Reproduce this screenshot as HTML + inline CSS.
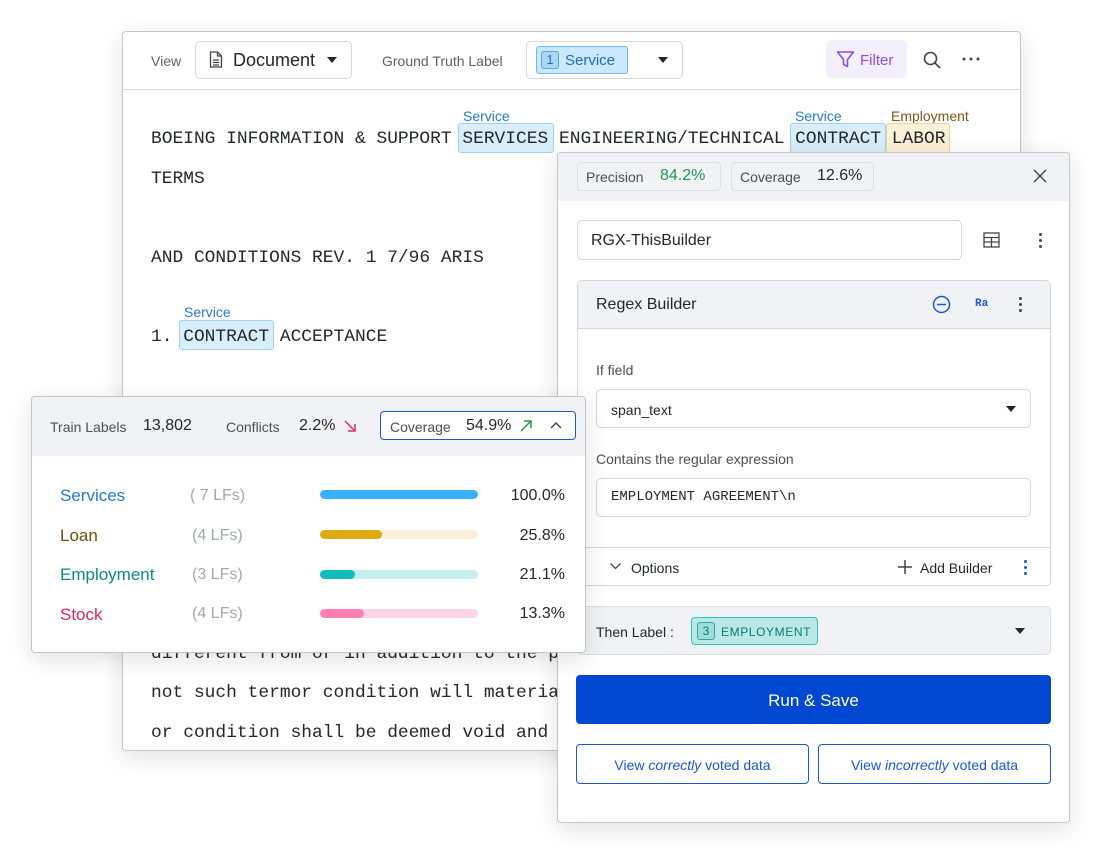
<!DOCTYPE html>
<html><head><meta charset="utf-8"><style>
*{box-sizing:border-box;margin:0;padding:0}
body{width:1100px;height:853px;background:#fff;position:relative;overflow:hidden;font-family:"Liberation Sans",sans-serif;color:#25272b}
.a{position:absolute}
.panel{position:absolute;background:#fff;border:1px solid #c3c6cc;border-radius:4px;box-shadow:0 6px 24px rgba(0,0,0,.12)}
.mono{font-family:"Liberation Mono",monospace;font-size:17.9px;color:#25272b;white-space:pre;line-height:20px}
.lbl{font-size:14px;color:#1f7ad6;white-space:nowrap;line-height:16px}
.chip{position:absolute;border:1px solid #9fd2f3;background:#d9eefb;border-radius:3px}
.t{position:absolute;white-space:nowrap;line-height:1}
.box{position:absolute;border:1px solid #d3d6dc;border-radius:5px;background:#fff}
.tri{width:0;height:0;border-left:5px solid transparent;border-right:5px solid transparent;border-top:6px solid #25272b;position:absolute}
.dots{position:absolute;width:3px}
.dots i{display:block;width:3px;height:3px;border-radius:50%;background:#444;margin-bottom:3px}
#pop{position:absolute;left:0;top:0;width:1100px;height:853px;z-index:10;pointer-events:none}
</style></head><body>

<div class="panel" style="left:122px;top:31px;width:899px;height:720px;">
  <div class="a" style="left:0;top:57px;width:897px;height:1px;background:#d5d8dd"></div>
</div>
<div class="t" style="left:151px;top:54px;font-size:14px;color:#5c6068">View</div>
<div class="box" style="left:195px;top:41px;width:157px;height:38px;"></div>
<svg class="a" style="left:209px;top:51px" width="14" height="17" viewBox="0 0 14 17" fill="none" stroke="#444" stroke-width="1.3"><path d="M1.5 1h7l4 4v11h-11z"/><path d="M8.5 1v4h4"/><path d="M4 9h6M4 11.5h6M4 14h6"/></svg>
<div class="t" style="left:233px;top:51px;font-size:18px;color:#25272b">Document</div>
<div class="tri" style="left:327px;top:57px"></div>
<div class="t" style="left:382px;top:54px;font-size:14px;color:#5c6068">Ground Truth Label</div>
<div class="box" style="left:526px;top:41px;width:157px;height:38px;"></div>
<div class="chip" style="left:536px;top:46px;width:92px;height:28px;border-color:#6bbaf0;background:#cbe8fc"></div>
<div class="a" style="left:541px;top:51px;width:18px;height:18px;border:1px solid #5aa8e0;border-radius:3px;background:#aad7f6;font-size:13px;color:#1f6bbd;text-align:center;line-height:16px">1</div>
<div class="t" style="left:565px;top:53px;font-size:15px;color:#1f6bbd">Service</div>
<div class="tri" style="left:658px;top:57px"></div>
<div class="a" style="left:826px;top:40px;width:81px;height:38px;background:#f3effd;border-radius:5px"></div>
<svg class="a" style="left:836px;top:50px" width="19" height="19" viewBox="0 0 19 19" fill="none" stroke="#8a4ee6" stroke-width="1.6" stroke-linejoin="round"><path d="M1.5 2h16l-6 7.5v7l-4-2v-5z"/></svg>
<div class="t" style="left:860px;top:53px;font-size:15px;color:#8a4ee6">Filter</div>
<svg class="a" style="left:922px;top:50px" width="20" height="20" viewBox="0 0 20 20" fill="none" stroke="#444" stroke-width="1.6"><circle cx="8.5" cy="8.5" r="6"/><path d="M13 13l5 5"/></svg>
<svg class="a" style="left:962px;top:57px" width="18" height="4" viewBox="0 0 18 4" fill="#444"><circle cx="2" cy="2" r="1.5"/><circle cx="9" cy="2" r="1.5"/><circle cx="16" cy="2" r="1.5"/></svg>

<div class="a lbl" style="left:463px;top:108px">Service</div>
<div class="a lbl" style="left:795px;top:108px">Service</div>
<div class="a lbl" style="left:891px;top:108px;color:#7a5a14">Employment</div>
<div class="chip" style="left:458px;top:123px;width:96px;height:30px"></div>
<div class="chip" style="left:790px;top:123px;width:96px;height:30px"></div>
<div class="chip" style="left:886px;top:123px;width:64px;height:30px;background:#fbf1d9;border-color:#ecd49a"></div>
<div class="a mono" style="left:151px;top:129px">BOEING INFORMATION &amp; SUPPORT SERVICES ENGINEERING/TECHNICAL CONTRACT LABOR</div>
<div class="a mono" style="left:151px;top:169px">TERMS</div>
<div class="a mono" style="left:151px;top:248px">AND CONDITIONS REV. 1 7/96 ARIS</div>
<div class="a lbl" style="left:184px;top:304px">Service</div>
<div class="chip" style="left:179px;top:320px;width:95px;height:30px"></div>
<div class="a mono" style="left:151px;top:327px">1. CONTRACT ACCEPTANCE</div>
<div class="a mono" style="left:151px;top:644px">different from or in addition to the p</div>
<div class="a mono" style="left:151px;top:683px">not such termor condition will materia</div>
<div class="a mono" style="left:151px;top:723px">or condition shall be deemed void and</div>

<div class="panel" style="left:557px;top:152px;width:513px;height:671px;overflow:hidden">
  <div class="a" style="left:0;top:0;width:513px;height:48px;background:#f1f2f6"></div>
</div>
<div class="a" style="left:577px;top:162px;width:144px;height:29px;border:1px solid #dcdfe4;border-radius:4px;background:#f1f2f6"></div>
<div class="t" style="left:586px;top:170px;font-size:14px;color:#4b4f57">Precision</div>
<div class="t" style="left:660px;top:168px;font-size:16px;color:#1e9a4a">84.2%</div>
<div class="a" style="left:731px;top:162px;width:143px;height:29px;border:1px solid #dcdfe4;border-radius:4px;background:#f1f2f6"></div>
<div class="t" style="left:740px;top:170px;font-size:14px;color:#4b4f57">Coverage</div>
<div class="t" style="left:817px;top:168px;font-size:16px;color:#25272b">12.6%</div>
<svg class="a" style="left:1033px;top:169px" width="14" height="14" viewBox="0 0 14 14" stroke="#444" stroke-width="1.5"><path d="M1 1l12 12M13 1L1 13"/></svg>

<div class="box" style="left:577px;top:220px;width:385px;height:40px;"></div>
<div class="t" style="left:591px;top:233px;font-size:16px;color:#25272b">RGX-ThisBuilder</div>
<svg class="a" style="left:983px;top:232px" width="17" height="16" viewBox="0 0 17 16" fill="none" stroke="#444" stroke-width="1.3"><rect x="1" y="1" width="15" height="14"/><path d="M1 5.5h15M1 10h15M8.5 5.5V15"/></svg>
<div class="dots" style="left:1039px;top:233px"><i></i><i></i><i></i></div>

<div class="a" style="left:577px;top:280px;width:474px;height:306px;border:1px solid #d3d6dc;border-radius:5px;background:#fff;overflow:hidden">
  <div class="a" style="left:0;top:0;width:474px;height:48px;background:#f1f2f6;border-bottom:1px solid #d3d6dc"></div>
  <div class="a" style="left:0;top:266px;width:474px;height:1px;background:#d3d6dc"></div>
</div>
<div class="t" style="left:596px;top:297px;font-size:16px;color:#25272b">Regex Builder</div>
<svg class="a" style="left:932px;top:295px" width="19" height="19" viewBox="0 0 19 19" fill="none" stroke="#1a56db" stroke-width="1.5"><circle cx="9.5" cy="9.5" r="8"/><path d="M5 9.5h9"/></svg>
<div class="t" style="left:975px;top:299px;font-size:11px;font-weight:bold;color:#1a56db;font-family:'Liberation Mono',monospace">Ra</div>
<div class="dots" style="left:1019px;top:297px"><i></i><i></i><i></i></div>

<div class="t" style="left:596px;top:363px;font-size:14px;color:#4b4f57">If field</div>
<div class="box" style="left:596px;top:389px;width:435px;height:39px;"></div>
<div class="t" style="left:611px;top:403px;font-size:14px;color:#25272b">span_text</div>
<div class="tri" style="left:1006px;top:406px"></div>
<div class="t" style="left:596px;top:452px;font-size:14px;color:#4b4f57">Contains the regular expression</div>
<div class="box" style="left:596px;top:478px;width:435px;height:39px;"></div>
<div class="t" style="left:611px;top:490px;font-size:14px;color:#25272b;font-family:'Liberation Mono',monospace">EMPLOYMENT AGREEMENT\n</div>

<svg class="a" style="left:609px;top:562px" width="13" height="9" viewBox="0 0 13 9" fill="none" stroke="#444" stroke-width="1.3"><path d="M1.5 1.5l5 5 5-5"/></svg>
<div class="t" style="left:631px;top:561px;font-size:14px;color:#25272b">Options</div>
<svg class="a" style="left:898px;top:560px" width="14" height="14" viewBox="0 0 14 14" stroke="#444" stroke-width="1.5"><path d="M7 0v14M0 7h14"/></svg>
<div class="t" style="left:920px;top:561px;font-size:14px;color:#25272b">Add Builder</div>
<div class="dots" style="left:1024px;top:560px"><i style="background:#1a56db"></i><i style="background:#1a56db"></i><i style="background:#1a56db"></i></div>

<div class="a" style="left:577px;top:606px;width:474px;height:49px;border:1px solid #dcdfe4;border-radius:5px;background:#f1f2f6"></div>
<div class="t" style="left:596px;top:625px;font-size:14px;color:#25272b">Then Label :</div>
<div class="a" style="left:691px;top:617px;width:127px;height:28px;border:1px solid #2cc4c0;border-radius:4px;background:#b9e8e7"></div>
<div class="a" style="left:697px;top:622px;width:18px;height:18px;border:1px solid #2aa9a5;border-radius:3px;background:#9fdcda;font-size:12px;color:#0d7a74;text-align:center;line-height:16px">3</div>
<div class="t" style="left:721px;top:626px;font-size:12px;color:#0d7a74;letter-spacing:.6px">EMPLOYMENT</div>
<div class="tri" style="left:1015px;top:628px"></div>

<div class="a" style="left:576px;top:675px;width:475px;height:49px;border-radius:4px;background:#0047d1"></div>
<div class="t" style="left:576px;top:692px;width:475px;text-align:center;font-size:17px;color:#fff">Run &amp; Save</div>
<div class="a" style="left:576px;top:744px;width:233px;height:40px;border:1.5px solid #1a56db;border-radius:4px"></div>
<div class="t" style="left:576px;top:758px;width:233px;text-align:center;font-size:14px;color:#1a56db">View <i>correctly</i> voted data</div>
<div class="a" style="left:818px;top:744px;width:233px;height:40px;border:1.5px solid #1a56db;border-radius:4px"></div>
<div class="t" style="left:818px;top:758px;width:233px;text-align:center;font-size:14px;color:#1a56db">View <i>incorrectly</i> voted data</div>

<div id="pop">
<div class="panel" style="left:31px;top:396px;width:555px;height:257px;overflow:hidden">
  <div class="a" style="left:0;top:0;width:555px;height:59px;background:#f1f2f6"></div>
</div>
<div class="t" style="left:50px;top:420px;font-size:14px;color:#4b4f57">Train Labels</div>
<div class="t" style="left:143px;top:418px;font-size:16px;color:#25272b">13,802</div>
<div class="t" style="left:226px;top:420px;font-size:14px;color:#4b4f57">Conflicts</div>
<div class="t" style="left:299px;top:418px;font-size:16px;color:#25272b">2.2%</div>
<svg class="a" style="left:343px;top:419px" width="14" height="14" viewBox="0 0 14 14" fill="none" stroke="#d9325a" stroke-width="1.5"><path d="M2 2l10 10M5 12h7V5"/></svg>
<div class="a" style="left:380px;top:411px;width:196px;height:29px;border:1.5px solid #1a56db;border-radius:4px;background:#fff"></div>
<div class="t" style="left:390px;top:420px;font-size:14px;color:#4b4f57">Coverage</div>
<div class="t" style="left:466px;top:418px;font-size:16px;color:#25272b">54.9%</div>
<svg class="a" style="left:519px;top:419px" width="14" height="14" viewBox="0 0 14 14" fill="none" stroke="#1e9a4a" stroke-width="1.5"><path d="M2 12L12 2M5 2h7v7"/></svg>
<svg class="a" style="left:549px;top:420px" width="14" height="10" viewBox="0 0 14 10" fill="none" stroke="#444" stroke-width="1.4"><path d="M2 8l5-5 5 5"/></svg>

<div class="t" style="left:60px;top:487px;font-size:17px;color:#1f7ad6">Services</div>
<div class="t" style="left:190px;top:488px;font-size:16px;color:#a3a7ae">( 7 LFs)</div>
<div class="a" style="left:320px;top:490px;width:158px;height:9px;border-radius:5px;background:#37b1ff"></div>
<div class="t" style="left:480px;top:488px;width:85px;text-align:right;font-size:16px">100.0%</div>

<div class="t" style="left:60px;top:527px;font-size:17px;color:#6b4f10">Loan</div>
<div class="t" style="left:192px;top:528px;font-size:16px;color:#a3a7ae">(4 LFs)</div>
<div class="a" style="left:320px;top:530px;width:158px;height:9px;border-radius:5px;background:#fbf1d9"></div>
<div class="a" style="left:320px;top:530px;width:62px;height:9px;border-radius:5px;background:#deaa12"></div>
<div class="t" style="left:480px;top:528px;width:85px;text-align:right;font-size:16px">25.8%</div>

<div class="t" style="left:60px;top:566px;font-size:17px;color:#0d8a80">Employment</div>
<div class="t" style="left:192px;top:567px;font-size:16px;color:#a3a7ae">(3 LFs)</div>
<div class="a" style="left:320px;top:570px;width:158px;height:9px;border-radius:5px;background:#c5eeee"></div>
<div class="a" style="left:320px;top:570px;width:35px;height:9px;border-radius:5px;background:#13bcb8"></div>
<div class="t" style="left:480px;top:567px;width:85px;text-align:right;font-size:16px">21.1%</div>

<div class="t" style="left:60px;top:606px;font-size:17px;color:#e0245e">Stock</div>
<div class="t" style="left:192px;top:606px;font-size:16px;color:#a3a7ae">(4 LFs)</div>
<div class="a" style="left:320px;top:609px;width:158px;height:9px;border-radius:5px;background:#ffd4e6"></div>
<div class="a" style="left:320px;top:609px;width:44px;height:9px;border-radius:5px;background:#ff7fb3"></div>
<div class="t" style="left:480px;top:606px;width:85px;text-align:right;font-size:16px">13.3%</div>
</div>

</body></html>
